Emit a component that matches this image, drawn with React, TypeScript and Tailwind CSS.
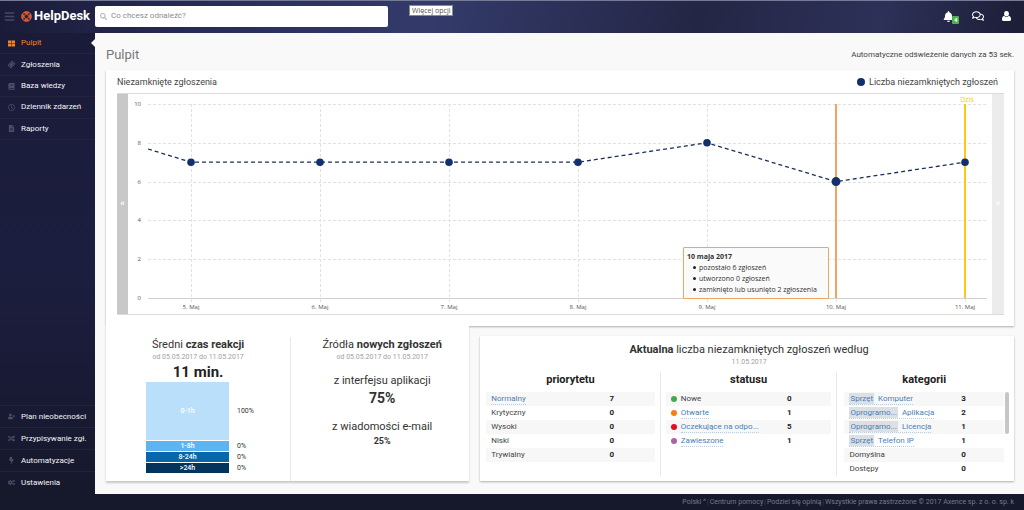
import type { ReactNode } from "react";
import {
  FaBars,
  FaBell,
  FaBolt,
  FaBook,
  FaCogs,
  FaFileAlt,
  FaRandom,
  FaRegClock,
  FaRegComments,
  FaSearch,
  FaThLarge,
  FaTicketAlt,
  FaUserTimes,
} from "react-icons/fa";

const mainNav = [
  { label: "Pulpit", icon: FaThLarge, active: true },
  { label: "Zgłoszenia", icon: FaTicketAlt, tilt: true },
  { label: "Baza wiedzy", icon: FaBook },
  { label: "Dziennik zdarzeń", icon: FaRegClock },
  { label: "Raporty", icon: FaFileAlt },
];

const bottomNav = [
  { label: "Plan nieobecności", icon: FaUserTimes },
  { label: "Przypisywanie zgł.", icon: FaRandom },
  { label: "Automatyzacje", icon: FaBolt },
  { label: "Ustawienia", icon: FaCogs },
];

const days = [
  { label: "5. Maj", value: 7 },
  { label: "6. Maj", value: 7 },
  { label: "7. Maj", value: 7 },
  { label: "8. Maj", value: 7 },
  { label: "9. Maj", value: 8 },
  { label: "10. Maj", value: 6, selected: true },
  { label: "11. Maj", value: 7 },
];

const reaction = [
  { label: "0-1h", value: "100%", row: "h-[58px]", bar: "bg-[#b9dffa]" },
  { label: "1-8h", value: "0%", row: "h-[10px]", bar: "bg-[#5cb4f3]" },
  { label: "8-24h", value: "0%", row: "h-[10px]", bar: "bg-[#0667ab]" },
  { label: ">24h", value: "0%", row: "h-[10px]", bar: "bg-[#03345c]" },
];

type Row = { label: string; count: number; link?: boolean; dot?: string; tag?: string };

const priorities: Row[] = [
  { label: "Normalny", count: 7, link: true },
  { label: "Krytyczny", count: 0 },
  { label: "Wysoki", count: 0 },
  { label: "Niski", count: 0 },
  { label: "Trywialny", count: 0 },
];

const statuses: Row[] = [
  { label: "Nowe", count: 0, dot: "bg-[#45a952]" },
  { label: "Otwarte", count: 1, link: true, dot: "bg-[#f57f17]" },
  { label: "Oczekujące na odpo...", count: 5, link: true, dot: "bg-[#e2101c]" },
  { label: "Zawieszone", count: 1, link: true, dot: "bg-[#a566a8]" },
];

const categories: Row[] = [
  { label: "Komputer", count: 3, link: true, tag: "Sprzęt" },
  { label: "Aplikacja", count: 2, link: true, tag: "Oprogramo..." },
  { label: "Licencja", count: 1, link: true, tag: "Oprogramo..." },
  { label: "Telefon IP", count: 1, link: true, tag: "Sprzęt" },
  { label: "Domyślna", count: 0 },
  { label: "Dostępy", count: 0 },
];

const Logo = () => (
  <svg viewBox="0 0 20 20" className="size-[11px] shrink-0" aria-hidden="true">
    <circle cx="10" cy="10" r="6.5" fill="none" stroke="#d9532c" strokeWidth="5" />
    <path d="M3.500 3.500l3.500 3.500M16.500 3.500l-3.500 3.500M3.500 16.500l3.500-3.500M16.500 16.500l-3.500-3.500" stroke="#33243a" strokeWidth="2.600" />
    <circle cx="10" cy="10" r="8.800" fill="none" stroke="#e9683f" strokeWidth="1.400" />
    <circle cx="10" cy="10" r="3.600" fill="none" stroke="#e9683f" strokeWidth="1" />
  </svg>
);

const Person = () => (
  <svg viewBox="0 0 18 20" className="h-[10px] w-[9px]" fill="currentColor" aria-hidden="true">
    <ellipse cx="9" cy="5.500" rx="4.800" ry="5.500" />
    <path d="M4.500 9.500C1.500 10 0 13 0 16.500 0 19 1.200 20 3 20h12c1.800 0 3-1 3-3.500 0-3.500-1.500-6.500-4.500-7-1 1.500-2.600 2.500-4.500 2.500S5.500 11 4.500 9.500z" />
  </svg>
);

const TopBar = () => (
  <header className="flex h-[33px] items-center border-t border-[#767a96] bg-[linear-gradient(100deg,#1a1b38,#282c56_20%,#343b6b_42%,#242645_68%,#2d3158_86%,#1c1d36)] pb-[2px]">
    <div className="flex w-[95px] shrink-0 items-center pl-1">
      <button type="button" aria-label="Menu" className="text-[#45476a]">
        <FaBars className="size-[11px]" />
      </button>
      <a href="#" className="ml-[6px] flex items-center gap-[2px] text-[13px] leading-4 font-bold text-white">
        <Logo />
        HelpDesk
      </a>
    </div>
    <label className="flex h-[21px] w-[293px] items-center gap-1 rounded-[2px] bg-white px-[5px]">
      <FaSearch className="size-[7px] text-[#b5b5b5]" />
      <input
        type="text"
        aria-label="Szukaj"
        placeholder="Co chcesz odnaleźć?"
        className="min-w-0 flex-1 text-[8px] leading-3 text-[#555] outline-none placeholder:text-[#8c8c8c]"
      />
    </label>
    <div className="mb-[12px] ml-[21px] border border-[#8a8a8a] bg-white px-[2px] font-['Open_Sans',sans-serif] text-[7px] leading-[9px] text-[#555]">
      Więcej opcji
    </div>
    <div className="ml-auto flex items-center gap-[18px] pr-[13px] text-white">
      <button type="button" aria-label="Powiadomienia" className="relative">
        <FaBell className="size-[11px]" />
        <span className="absolute top-[5px] left-[9px] rounded-[1px] bg-[#4caf50] px-[2px] text-[6px] leading-[8px] font-bold">
          4
        </span>
      </button>
      <button type="button" aria-label="Rozmowy">
        <FaRegComments className="size-[12px]" />
      </button>
      <button type="button" aria-label="Konto">
        <Person />
      </button>
    </div>
  </header>
);

type NavItem = { label: string; icon: typeof FaBell; active?: boolean; tilt?: boolean };

const NavList = ({ items, className }: { items: NavItem[]; className: string }) => (
  <ul className={`flex flex-col divide-y divide-[#22243f] ${className}`}>
    {items.map(({ label, icon: Icon, active, tilt }) => (
      <li key={label} className="relative flex flex-1 items-center">
        <a
          href="#"
          className={`flex items-center gap-[6px] pl-2 text-[8px] leading-3 ${active ? "text-[#f58220]" : "text-[#f4f4f8]"}`}
        >
          <Icon className={`size-[7px] ${active ? "" : "text-[#4d4f69]"} ${tilt ? "-rotate-45" : ""}`} />
          {label}
        </a>
        {active && (
          <span className="absolute right-0 border-y-[4px] border-r-[4px] border-y-transparent border-r-[#f9f9f9]" />
        )}
      </li>
    ))}
  </ul>
);

const dayX = (i: number) => 63 + i * 129;
const valueY = (v: number) => 204 - v * 19.4;

const Chart = () => (
  <div className="flex border-y border-[#dcdcdc]">
    <button type="button" aria-label="Wcześniej" className="w-[11px] shrink-0 bg-[#c8c8c8] text-[9px] font-bold text-white">
      «
    </button>
    <div className="relative flex-1">
      <svg viewBox="0 0 864 220" className="block w-full font-['Open_Sans',sans-serif] text-[6px]" fill="#555">
        {[0, 2, 4, 6, 8, 10].map((v) => (
          <g key={v}>
            <line
              x1="20"
              x2="859"
              y1={Math.round(valueY(v)) + 0.5}
              y2={Math.round(valueY(v)) + 0.5}
              stroke={v === 0 ? "#d0d0d0" : "#e2e2e2"}
              strokeDasharray={v === 0 ? undefined : "3 2"}
            />
            <text x="13" y={valueY(v) + 2} textAnchor="end">
              {v}
            </text>
          </g>
        ))}
        {days.map((d, i) => (
          <g key={d.label}>
            <line x1={dayX(i) + 0.5} x2={dayX(i) + 0.5} y1="10" y2="208" stroke="#e2e2e2" strokeDasharray="3 2" />
            <text x={dayX(i)} y="215" textAnchor="middle">
              {d.label}
            </text>
          </g>
        ))}
        <line x1="708" x2="708" y1="10" y2="204" stroke="#f0a55f" strokeWidth="2" />
        <line x1="837" x2="837" y1="10" y2="204" stroke="#fcc917" strokeWidth="2" />
        <text x="839" y="8" textAnchor="middle" fill="#fcc917" fontSize="7">
          Dziś
        </text>
        <polyline
          points={`20,55 ${days.map((d, i) => `${dayX(i)},${valueY(d.value)}`).join(" ")}`}
          fill="none"
          stroke="#1c2f5c"
          strokeWidth="1.3"
          strokeDasharray="4 3"
        />
        {days.map((d, i) => (
          <circle key={d.label} cx={dayX(i)} cy={valueY(d.value)} r={d.selected ? 4.5 : 3.8} fill="#12306b" />
        ))}
      </svg>
      <div className="absolute right-[163px] bottom-[15px] w-[146px] rounded-[1px] border border-[#f0a55f] bg-[#fafafa] px-[3px] py-[3px] font-['Open_Sans',sans-serif] text-[7px] leading-[11px] whitespace-nowrap text-[#333]">
        <div className="font-bold">10 maja 2017</div>
        <ul className="pl-[6px]">
          {["pozostało 6 zgłoszeń", "utworzono 0 zgłoszeń", "zamknięto lub usunięto 2 zgłoszenia"].map((line) => (
            <li key={line} className="flex items-center gap-[3px]">
              <span className="size-[3px] rounded-full bg-[#222]" />
              {line}
            </li>
          ))}
        </ul>
      </div>
    </div>
    <button type="button" aria-label="Później" className="w-3 shrink-0 bg-[#ececec] text-[9px] font-bold text-white">
      »
    </button>
  </div>
);

const CountTable = ({ title, rows }: { title: string; rows: Row[] }) => (
  <section className="min-w-0 flex-1">
    <h3 className="text-center text-[11px] leading-4 font-bold text-[#222]">{title}</h3>
    <table className="mt-1 w-full table-fixed text-[8px] leading-[14px] text-[#444]">
      <tbody>
        {rows.map((r) => (
          <tr key={r.label} className="h-[14px] odd:bg-[#f7f7f7]">
            <td className="w-[72%] pl-[5px] whitespace-nowrap">
              <div className="flex items-center">
                {r.dot && <span className={`mr-1 size-[6px] rounded-full ${r.dot}`} />}
                {r.link ? (
                  <a href="#" className="flex h-3 items-center border-b border-dotted border-[#b9cee3] text-[#4a80b5]">
                    {r.tag && <span className="mr-1 bg-[#dcdfe3] px-px leading-[11px]">{r.tag}</span>}
                    {r.label}
                  </a>
                ) : (
                  r.label
                )}
              </div>
            </td>
            <td className="pl-[2px] font-bold text-[#222]">{r.count}</td>
          </tr>
        ))}
      </tbody>
    </table>
  </section>
);

const PanelTitle = ({ children, date }: { children: ReactNode; date: string }) => (
  <>
    <h2 className="text-center text-[11px] leading-4 text-[#333]">{children}</h2>
    <p className="text-center text-[7px] leading-2 text-[#a0a0a0]">{date}</p>
  </>
);

export default function App() {
  return (
    <div className="flex min-h-screen flex-col bg-[#16182c] font-[Roboto,sans-serif] text-[#333]">
      <TopBar />
      <div className="flex flex-1">
        <nav className="flex w-[95px] shrink-0 flex-col justify-between bg-linear-to-b from-[#1a1b38] via-[#1c1e3f] to-[#16182c] pb-px">
          <NavList items={mainNav} className="h-[107px] border-b border-[#22243f]" />
          <NavList items={bottomNav} className="h-[88px] border-t border-[#22243f]" />
        </nav>
        <main className="flex min-w-0 flex-1 flex-col bg-[#f9f9f9] pr-[10px] pb-[13px] pl-[11px]">
          <div className="flex h-[37px] items-center justify-between pt-[6px]">
            <h1 className="text-[13px] leading-4 text-[#777]">Pulpit</h1>
            <p className="text-[8px] leading-3 text-[#444]">Automatyczne odświeżenie danych za 53 sek.</p>
          </div>
          <section className="bg-white pr-[10px] pb-[11px] pl-[11px] shadow-[0_1px_2px_rgba(0,0,0,0.3)]">
            <div className="flex h-[23px] items-center justify-between pr-[6px] text-[9px] leading-3 text-[#444]">
              <h2>Niezamknięte zgłoszenia</h2>
              <div className="flex items-center gap-1">
                <span className="size-2 rounded-full bg-[#12306b]" />
                Liczba niezamkniętych zgłoszeń
              </div>
            </div>
            <Chart />
          </section>
          <div className="flex flex-1">
            <section className="relative flex w-2/5 bg-white pt-[11px] shadow-[0_2px_2px_rgba(0,0,0,0.2)]">
              <div className="w-[51%] border-r border-[#e8e8e8]">
                <PanelTitle date="od 05.05.2017 do 11.05.2017">
                  Średni <b>czas reakcji</b>
                </PanelTitle>
                <div className="mt-[3px] text-center text-[15px] leading-4 font-bold text-[#222]">11 min.</div>
                <div className="mt-[2px] flex flex-col gap-px pl-10 text-[7px]">
                  {reaction.map((r) => (
                    <div key={r.label} className={`flex items-center gap-2 ${r.row}`}>
                      <div className={`flex h-full w-[83px] items-center justify-center font-medium text-white ${r.bar}`}>
                        {r.label}
                      </div>
                      {r.value}
                    </div>
                  ))}
                </div>
              </div>
              <div className="flex flex-1 flex-col pl-1 text-center">
                <PanelTitle date="od 05.05.2017 do 11.05.2017">
                  Źródła <b>nowych zgłoszeń</b>
                </PanelTitle>
                <div className="mt-3 text-[11px] leading-4">z interfejsu aplikacji</div>
                <div className="text-[14px] leading-[18px] font-bold">75%</div>
                <div className="mt-3 text-[11px] leading-4">z wiadomości e-mail</div>
                <div className="text-[9px] leading-3 font-bold">25%</div>
              </div>
            </section>
            <section className="mt-[10px] ml-[11px] flex-1 bg-white pt-[6px] pl-1 shadow-[0_1px_2px_rgba(0,0,0,0.3)]">
              <PanelTitle date="11.05.2017">
                <b>Aktualna</b> liczba niezamkniętych zgłoszeń według
              </PanelTitle>
              <div className="mt-[6px] grid grid-cols-3 divide-x divide-[#e8e8e8]">
                <div className="flex pr-[5px] pl-[2px]">
                  <CountTable title="priorytetu" rows={priorities} />
                </div>
                <div className="flex px-[5px]">
                  <CountTable title="statusu" rows={statuses} />
                </div>
                <div className="flex gap-px pr-[5px] pl-[7px]">
                  <CountTable title="kategorii" rows={categories} />
                  <div className="mt-5 h-[42px] w-[4px] rounded-full bg-[#c6c6c6]" />
                </div>
              </div>
            </section>
          </div>
        </main>
      </div>
      <footer className="flex h-4 items-center justify-end pr-[10px] text-[7px] text-[#777990]">
        <a href="#">Polski ^</a>
        <span className="px-px text-[#44465c]">|</span>
        <a href="#">Centrum pomocy</a>
        <span className="px-px text-[#44465c]">|</span>
        <a href="#">Podziel się opinią</a>
        <span className="px-px text-[#44465c]">|</span>
        <span>Wszystkie prawa zastrzeżone © 2017 Axence sp. z o. o. sp. k</span>
      </footer>
    </div>
  );
}
